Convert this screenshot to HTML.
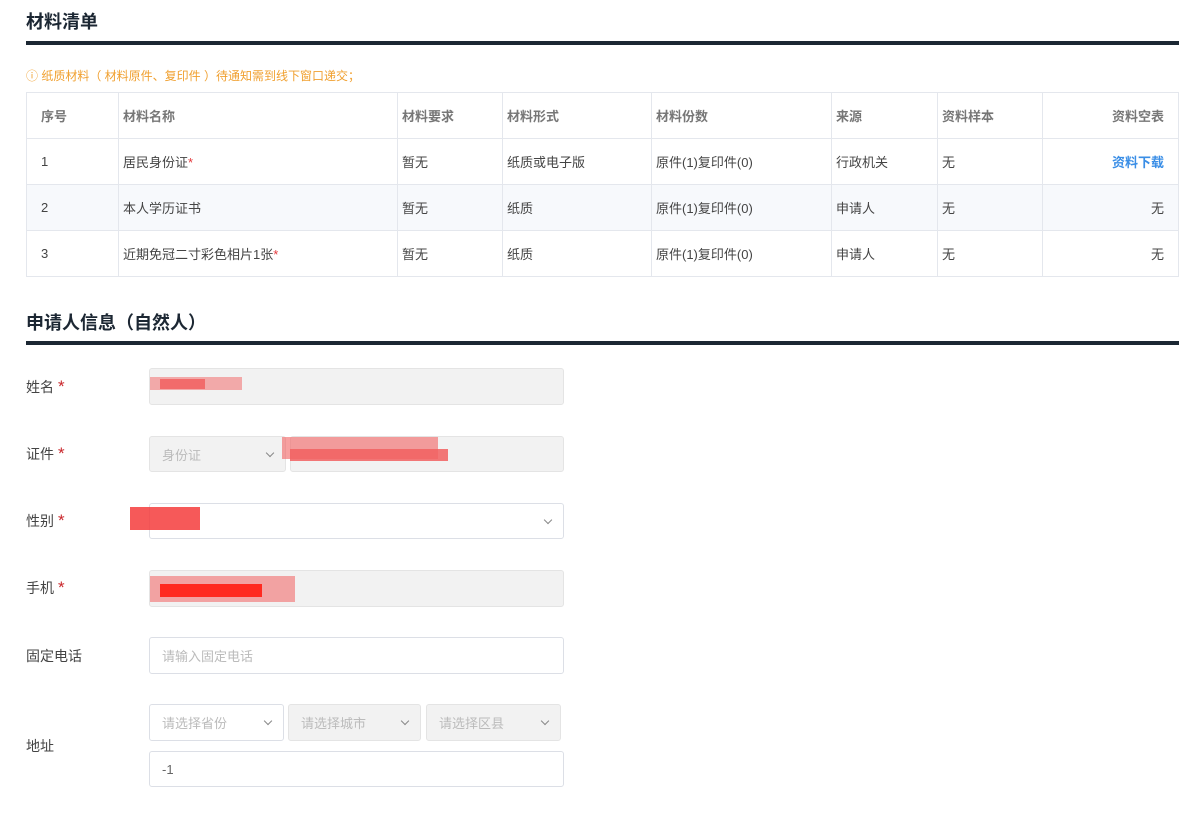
<!DOCTYPE html>
<html><head><meta charset="utf-8"><style>
*{box-sizing:border-box;margin:0;padding:0}
body{width:1200px;height:826px;background:#fff;font-family:"Liberation Sans","Noto Sans CJK SC",sans-serif;color:#333;position:relative;overflow:hidden}
.a{position:absolute}
h2{position:absolute;left:26px;font-size:18px;font-weight:bold;color:#1c2733}
.bar{position:absolute;left:26px;width:1153px;height:4px;background:#1c2733}
table{position:absolute;left:26px;top:92px;width:1153px;border-collapse:collapse;font-size:13px}
td{border:1px solid #e4e7ed;height:46px;padding:0 0 0 4px;color:#444}
th{border:1px solid #e4e7ed;height:46px;padding:0 0 0 4px;text-align:left;font-weight:bold;color:#777;font-size:13px}
td:first-child,th:first-child{padding-left:14px}
tr.s td{background:#f7f9fc}
.r{color:#e4393c}
.lab{position:absolute;left:26px;font-size:14px;color:#444}
.lab i{font-style:normal;color:#c9262b;margin-left:4px;font-size:17px}
.in{position:absolute;border:1px solid #dcdfe6;border-radius:3px;background:#fff;font-size:13px;color:#bbb;padding-left:12px;display:flex;align-items:center}
.dis{background:#f2f2f2;border-color:#e4e4e4}
.chev{position:absolute;right:12px;top:13px;width:6px;height:6px;border-right:1.3px solid #888;border-bottom:1.3px solid #888;transform:rotate(45deg)}
.red{position:absolute;background:#f26060;opacity:.85}
</style></head><body>
<h2 style="top:8px">材料清单</h2>
<div class="bar" style="top:41px"></div>
<div class="a" style="left:26px;top:67px;font-size:12px;color:#f0a030">ⓘ 纸质材料（ 材料原件、复印件 ）待通知需到线下窗口递交；</div>
<table>
<tr><th style="width:92px">序号</th><th style="width:279px">材料名称</th><th style="width:105px">材料要求</th><th style="width:149px">材料形式</th><th style="width:180px">材料份数</th><th style="width:106px">来源</th><th style="width:105px">资料样本</th><th style="text-align:right;padding-right:14px">资料空表</th></tr>
<tr><td>1</td><td>居民身份证<span class="r">*</span></td><td>暂无</td><td>纸质或电子版</td><td>原件(1)复印件(0)</td><td>行政机关</td><td>无</td><td style="text-align:right;padding-right:14px;color:#3a8ee6;font-weight:bold">资料下载</td></tr>
<tr class="s"><td>2</td><td>本人学历证书</td><td>暂无</td><td>纸质</td><td>原件(1)复印件(0)</td><td>申请人</td><td>无</td><td style="text-align:right;padding-right:14px">无</td></tr>
<tr><td>3</td><td>近期免冠二寸彩色相片1张<span class="r">*</span></td><td>暂无</td><td>纸质</td><td>原件(1)复印件(0)</td><td>申请人</td><td>无</td><td style="text-align:right;padding-right:14px">无</td></tr>
</table>
<h2 style="top:309px">申请人信息（自然人）</h2>
<div class="bar" style="top:341px"></div>

<div class="lab" style="top:377px">姓名<i>*</i></div>
<div class="in dis" style="left:149px;top:368px;width:415px;height:37px"></div>
<div class="red" style="left:150px;top:377px;width:92px;height:13px;opacity:.5"></div>
<div class="red" style="left:160px;top:379px;width:45px;height:10px"></div>

<div class="lab" style="top:444px">证件<i>*</i></div>
<div class="in dis" style="left:149px;top:436px;width:137px;height:36px">身份证<span class="chev"></span></div>
<div class="in dis" style="left:290px;top:436px;width:274px;height:36px"></div>
<div class="red" style="left:282px;top:437px;width:156px;height:22px;opacity:.6"></div>
<div class="red" style="left:290px;top:449px;width:158px;height:12px"></div>

<div class="lab" style="top:511px">性别<i>*</i></div>
<div class="in" style="left:149px;top:503px;width:415px;height:36px"><span class="chev"></span></div>
<div class="red" style="left:130px;top:507px;width:70px;height:23px;background:#f53c3c"></div>

<div class="lab" style="top:578px">手机<i>*</i></div>
<div class="in dis" style="left:149px;top:570px;width:415px;height:37px"></div>
<div class="red" style="left:150px;top:576px;width:145px;height:26px;opacity:.55"></div>
<div class="red" style="left:160px;top:584px;width:102px;height:13px;background:#ff2a20;opacity:1"></div>

<div class="lab" style="top:646px">固定电话</div>
<div class="in" style="left:149px;top:637px;width:415px;height:37px">请输入固定电话</div>

<div class="lab" style="top:736px">地址</div>
<div class="in" style="left:149px;top:704px;width:135px;height:37px">请选择省份<span class="chev"></span></div>
<div class="in dis" style="left:288px;top:704px;width:133px;height:37px">请选择城市<span class="chev"></span></div>
<div class="in dis" style="left:426px;top:704px;width:135px;height:37px">请选择区县<span class="chev"></span></div>
<div class="in" style="left:149px;top:751px;width:415px;height:36px;color:#666">-1</div>
</body></html>
